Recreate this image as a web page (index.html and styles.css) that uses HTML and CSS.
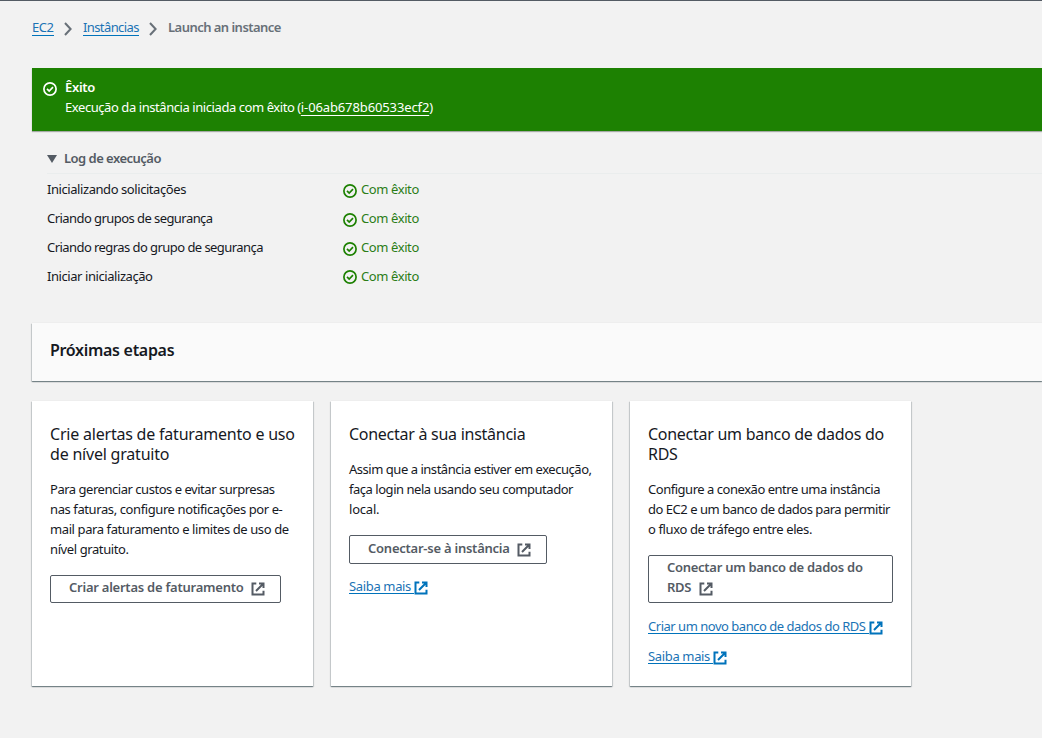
FILE: index.html
```html
<!DOCTYPE html>
<html lang="pt-BR">
<head>
<meta charset="utf-8">
<title>Launch an instance</title>
<link rel="stylesheet" href="styles.css">
</head>
<body>
<svg class="defs" aria-hidden="true">
  <symbol id="check" viewBox="0 0 14 14"><circle cx="7" cy="7" r="6.1"/><path d="M4 6.8 6.2 9 10 5.2"/></symbol>
  <symbol id="ext" viewBox="0 0 14 14"><path d="M5.3 1.5H1.5v11h11V8.7M8 1.5h4.5v4.5M12.2 1.8 5 9"/></symbol>
  <symbol id="chev" viewBox="0 0 8 14"><path d="M1 1l5.6 6L1 13"/></symbol>
</svg>
<main class="page">
  <nav class="crumbs">
    <a class="c-ec2" href="#"><span>EC2</span></a>
    <svg class="chev"><use href="#chev"/></svg>
    <a class="c-inst" href="#"><span>Instâncias</span></a>
    <svg class="chev"><use href="#chev"/></svg>
    <b>Launch an instance</b>
  </nav>
  <section class="flash">
    <svg class="icon"><use href="#check"/></svg>
    <div>
      <b class="flash-title">Êxito</b>
      <p>Execução da instância iniciada com êxito (<a href="#">i-06ab678b60533ecf2</a>)</p>
    </div>
  </section>
  <section class="log">
    <h2 class="log-title"><i class="caret"></i>Log de execução</h2>
    <div class="row"><span>Inicializando solicitações</span><span class="ok"><svg class="icon"><use href="#check"/></svg>Com êxito</span></div>
    <div class="row"><span class="tighter">Criando grupos de segurança</span><span class="ok"><svg class="icon"><use href="#check"/></svg>Com êxito</span></div>
    <div class="row"><span class="tighter">Criando regras do grupo de segurança</span><span class="ok"><svg class="icon"><use href="#check"/></svg>Com êxito</span></div>
    <div class="row"><span>Iniciar inicialização</span><span class="ok"><svg class="icon"><use href="#check"/></svg>Com êxito</span></div>
  </section>
  <header class="next"><h2>Próximas etapas</h2></header>
  <section class="cards">
    <article class="card">
      <h3 class="wide">Crie alertas de faturamento e uso<br>de nível gratuito</h3>
      <p class="relaxed"><span class="tight">Para gerenciar custos e evitar surpresas</span><br>nas faturas, configure notificações por e-<br>mail para faturamento e limites de uso de<br>nível gratuito.</p>
      <a class="btn b1" href="#">Criar alertas de faturamento<svg class="ext"><use href="#ext"/></svg></a>
    </article>
    <article class="card">
      <h3>Conectar à sua instância</h3>
      <p class="tight">Assim que a instância estiver em execução,<br>faça login nela usando seu computador<br><span class="local">local.</span></p>
      <a class="btn b2" href="#">Conectar-se à instância<svg class="ext"><use href="#ext"/></svg></a>
      <a class="link" href="#"><span>Saiba mais</span><svg class="ext"><use href="#ext"/></svg></a>
    </article>
    <article class="card">
      <h3>Conectar um banco de dados do<br>RDS</h3>
      <p class="tight">Configure a conexão entre uma instância<br>do EC2 e um banco de dados para permitir<br><span class="flow">o fluxo de tráfego entre eles.</span></p>
      <a class="btn b3" href="#">Conectar um banco de dados do<br>RDS<svg class="ext"><use href="#ext"/></svg></a>
      <a class="link long" href="#"><span>Criar um novo banco de dados do RDS</span><svg class="ext"><use href="#ext"/></svg></a>
      <a class="link" href="#"><span>Saiba mais</span><svg class="ext"><use href="#ext"/></svg></a>
    </article>
  </section>
</main>
</body>
</html>
```
FILE: styles.css
```css
* { box-sizing: border-box; margin: 0; padding: 0; }
body {
  background: #f2f2f2;
  color: #16191f;
  font: 13px/20px "Noto Sans", "Open Sans", sans-serif;
  letter-spacing: -0.43px;
  height: 738px;
  overflow: hidden;
  white-space: nowrap;
}
.defs { display: block; width: 0; height: 0; }
svg { fill: none; stroke: currentColor; flex: none; }
.icon { width: 14px; height: 14px; stroke-width: 1.7; }
.ext { width: 14px; height: 14px; stroke-width: 2; }
.relaxed { letter-spacing: -0.4px; }
.tight { letter-spacing: -0.47px; }
.tighter { letter-spacing: -0.56px; }
.local { letter-spacing: -0.2px; }
.flow { letter-spacing: -0.38px; }
.page { border-top: 1px solid #545b64; padding: 16px 0 0 32px; height: 738px; }
b, h2 { font-weight: 600; }
.crumbs { display: flex; align-items: flex-start; height: 51px; color: #687078; letter-spacing: -0.53px; }
.crumbs a { color: #1a73b5; text-decoration: none; }
.crumbs a span { display: block; height: 19px; border-bottom: 1px solid #0073bb; }
.c-ec2 { width: 22px; }
.c-inst { width: 56px; letter-spacing: -0.6px; }
.chev { width: 8px; height: 14px; margin: 5px 11px 0 10px; stroke-width: 2; }
.flash { display: flex; gap: 8px; height: 63px; padding: 9px 0 0 11px; background: #1d8102; color: #fff; box-shadow: 0 1px 1px #a5aaa5; }
.flash .icon { margin-top: 5px; }
.flash-title { display: block; letter-spacing: -0.3px; }
.flash a { color: #fff; letter-spacing: -0.12px; text-decoration: underline; text-underline-offset: 3px; }
.log { height: 192px; padding: 17px 0 0 15px; }
.log-title { display: flex; align-items: center; height: 26px; padding-bottom: 5px; border-bottom: 1px solid #eaeded; font-size: 13px; color: #545b64; letter-spacing: -0.52px; }
.caret { border: 5px solid transparent; border-top: 8px solid #545b64; border-bottom: 0; margin: 2px 7px 0 0; }
.row { display: flex; height: 29px; padding-top: 5px; }
.row > span:first-child { width: 296px; }
.ok { display: flex; gap: 4px; color: #2b7d17; letter-spacing: -0.4px; }
.row .icon { margin-top: 5px; color: #1d8102; }
.row:last-child .icon { margin-top: 4px; }
.next, .card { box-shadow: 0 1px 1px rgba(0, 28, 36, .36), 1px 1px 1px rgba(0, 28, 36, .12), -1px 1px 1px rgba(0, 28, 36, .12), 0 0 1px rgba(0, 28, 36, .1); }
.next { height: 58px; padding: 17px 18px; background: #fafafa; }
.next h2 { font-size: 16px; line-height: 20px; letter-spacing: -0.3px; }
.cards { display: grid; grid-template-columns: repeat(3, 281px); gap: 18px; margin-top: 20px; }
.card { height: 285px; padding: 23px 18px 0; background: #fff; }
.card h3 { font-size: 16px; line-height: 20px; font-weight: 400; margin-bottom: 15px; letter-spacing: -0.27px; }
.card h3.wide { letter-spacing: -0.21px; }
.card p { margin-bottom: 16px; }
.btn { display: block; padding: 2px 14px 2px 18px; border: 1px solid #545b64; border-radius: 2px; color: #545b64; font-weight: 600; text-decoration: none; letter-spacing: -0.24px; }
.btn .ext { margin-left: 7px; vertical-align: -4px; }
.b1 { width: 231px; height: 28px; padding-top: 1px; }
.b2 { width: 198px; height: 29px; }
.b3 { width: 245px; height: 48px; padding-top: 1px; letter-spacing: -0.28px; }
.b3 .ext { margin-left: 8px; }
.link { display: flex; margin-top: 13px; height: 17px; color: #1a73b5; text-decoration: none; letter-spacing: -0.35px; }
.link.long { letter-spacing: -0.48px; }
.b2 + .link { margin-top: 12px; }
.link span { height: 18px; padding-right: 3px; border-bottom: 1px solid #0073bb; }
.link.long span { padding-right: 4px; }
.link .ext { margin-top: 5px; color: #0073bb; }
```
